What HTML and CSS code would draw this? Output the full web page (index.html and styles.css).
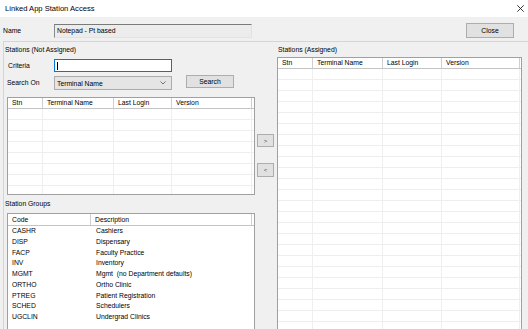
FILE: index.html
```html
<!DOCTYPE html>
<html lang="en">
    <head>
        <meta charset="utf-8">
        <title>Linked App Station Access</title>
        <link rel="stylesheet" href="styles.css">
    </head>
    <body>
        <div class="titlebar">
            <span>Linked App Station Access</span>
            <svg class="close-x" width="7" height="7" viewBox="0 0 7 7"><path d="M0.3 0.3 L6.7 6.7 M6.7 0.3 L0.3 6.7" stroke="#222" stroke-width="0.9" fill="none"/></svg>
        </div>
        <div class="window">
            <div class="name-row">
                <label class="name-label">Name</label>
                <div class="readonly-box">Notepad - Pt based</div>
                <button type="button" class="btn close-btn">Close</button>
            </div>

            <div class="panel">
                <div class="col-left">
                    <div class="group-label">Stations (Not Assigned)</div>
                    <div class="form-row criteria-row">
                        <label class="field-label">Criteria</label>
                        <div class="textbox focused"><span class="caret"></span></div>
                    </div>
                    <div class="form-row search-row">
                        <label class="field-label search-label">Search On</label>
                        <div class="combo">
                            <span>Terminal Name</span>
                            <svg width="6" height="4" viewBox="0 0 6 4"><path d="M0.5 0.5 L3 3 L5.5 0.5" stroke="#555" stroke-width="0.8" fill="none"/></svg>
                        </div>
                        <button type="button" class="btn search-btn">Search</button>
                    </div>

                    <div class="list stations-list unassigned">
                        <div class="list-head">
                            <div>Stn</div><div>Terminal Name</div><div>Last Login</div><div>Version</div>
                        </div>
                        <div class="list-body lined">
                            <div></div><div></div><div></div><div></div>
                        </div>
                    </div>

                    <div class="group-label groups-label">Station Groups</div>
                    <div class="list groups-list">
                        <div class="list-head">
                            <div>Code</div><div>Description</div>
                        </div>
                        <div class="list-body">
                            <div class="row"><div>CASHR</div><div>Cashiers</div></div>
                            <div class="row"><div>DISP</div><div>Dispensary</div></div>
                            <div class="row"><div>FACP</div><div>Faculty Practice</div></div>
                            <div class="row"><div>INV</div><div>Inventory</div></div>
                            <div class="row"><div>MGMT</div><div>Mgmt&nbsp; (no Department defaults)</div></div>
                            <div class="row"><div>ORTHO</div><div>Ortho Clinic</div></div>
                            <div class="row"><div>PTREG</div><div>Patient Registration</div></div>
                            <div class="row"><div>SCHED</div><div>Schedulers</div></div>
                            <div class="row"><div>UGCLIN</div><div>Undergrad Clinics</div></div>
                        </div>
                    </div>
                </div>

                <div class="col-mid">
                    <button type="button" class="btn move-btn">&gt;</button>
                    <button type="button" class="btn move-btn move-back">&lt;</button>
                </div>

                <div class="col-right">
                    <div class="group-label">Stations (Assigned)</div>
                    <div class="list stations-list assigned">
                        <div class="list-head">
                            <div>Stn</div><div>Terminal Name</div><div>Last Login</div><div>Version</div>
                        </div>
                        <div class="list-body lined">
                            <div></div><div></div><div></div><div></div>
                        </div>
                    </div>
                </div>
            </div>
        </div>
    </body>
</html>
```

FILE: styles.css
```css
* {
    box-sizing: border-box;
}

body {
    margin: 0;
    width: 528px;
    height: 329px;
    overflow: hidden;
    background-color: #f0f0f0;
    font-family: "Liberation Sans", Arial, sans-serif;
    font-size: 6.8px;
    color: #000;
}

.titlebar {
    height: 17px;
    background-color: #fff;
    display: flex;
    align-items: center;
    justify-content: space-between;
    padding: 0 4px 0 5px;
    font-size: 7.6px;
}

.window {
    height: 312px;
}

.name-row {
    display: flex;
    align-items: flex-start;
    height: 24px;
    padding: 6px 14px 0 3px;
}

.name-label {
    width: 51px;
    line-height: 14px;
    margin-top: 1px;
}

.readonly-box {
    width: 198px;
    height: 14px;
    margin-top: 1px;
    padding-left: 2px;
    line-height: 12px;
    background-color: #ececec;
    border: 1px solid;
    border-color: #7a7a7a #e3e3e3 #e3e3e3 #8a8a8a;
}

.btn {
    font-family: inherit;
    font-size: 6.8px;
    color: #000;
    background-color: #e1e1e1;
    border: 1px solid #adadad;
    padding: 0;
    margin: 0;
}

.close-btn {
    margin-left: auto;
    width: 48px;
    height: 15px;
}

.panel {
    height: 288px;
    margin-left: 3px;
    border-top: 1px solid #d5d5d5;
    border-left: 1px solid #d5d5d5;
    display: flex;
    overflow: hidden;
}

.col-left {
    width: 251px;
}

.group-label {
    height: 15px;
    line-height: 15px;
    padding-left: 1px;
}

.form-row {
    display: flex;
    align-items: flex-start;
}

.criteria-row {
    margin-top: 2px;
}

.search-row {
    margin-top: 4px;
}

.field-label {
    width: 50px;
    padding-left: 4px;
    line-height: 13px;
}

.search-label {
    padding-left: 3px;
    line-height: 14px;
}

.textbox {
    width: 118px;
    height: 13px;
    background-color: #fff;
    border: 1px solid #0078d7;
    padding: 2px 0 0 2px;
}

.caret {
    display: block;
    width: 1px;
    height: 8px;
    background-color: #000;
}

.combo {
    width: 118px;
    height: 14px;
    background-color: #e5e5e5;
    border: 1px solid #acacac;
    display: flex;
    align-items: center;
    justify-content: space-between;
    padding: 0 5px 0 2px;
}

.search-btn {
    width: 48px;
    height: 13px;
    margin: -1px 0 0 14px;
}

.list {
    background-color: #fff;
    border: 1px solid #a0a0a0;
    display: flex;
    flex-direction: column;
    overflow: hidden;
}

.list-head {
    display: grid;
    height: 11px;
    border-bottom: 1px solid #c4c4c4;
}

.list-head div {
    padding-left: 4px;
    line-height: 10px;
    border-right: 1px solid #cfcfcf;
    white-space: nowrap;
}

.list-body {
    flex: 1;
}

.lined {
    display: grid;
    background-image: repeating-linear-gradient(to bottom, #fff 0 10px, #eeeeee 10px 11px);
}

.lined div {
    border-right: 1px solid #efefef;
}

.unassigned {
    width: 248px;
    height: 98px;
    margin: 7px 0 0 3px;
}

.unassigned .list-head,
.unassigned .list-body {
    grid-template-columns: 35px 71px 58px 80px;
}

.groups-label {
    height: 18px;
    line-height: 18px;
}

.groups-list {
    width: 248px;
    height: 140px;
    margin-left: 3px;
}

.groups-list .list-head {
    height: 12px;
    grid-template-columns: 83px 161px;
}

.groups-list .list-head div {
    line-height: 11px;
}

.row {
    display: grid;
    grid-template-columns: 83px 161px;
    height: 10.75px;
    line-height: 10.75px;
}

.row div {
    padding-left: 4px;
    white-space: nowrap;
}

.row div + div {
    padding-left: 5px;
}

.col-mid {
    width: 22px;
    display: flex;
    flex-direction: column;
    padding: 92px 0 0 2px;
}

.move-btn {
    width: 17px;
    height: 13px;
    color: #444;
    font-size: 6px;
}

.move-back {
    margin-top: 16px;
    height: 14px;
}

.col-right {
    width: 245px;
}

.assigned {
    width: 245px;
    height: 290px;
}

.assigned .list-head,
.assigned .list-body {
    grid-template-columns: 35px 70px 59px 78px;
}
```
